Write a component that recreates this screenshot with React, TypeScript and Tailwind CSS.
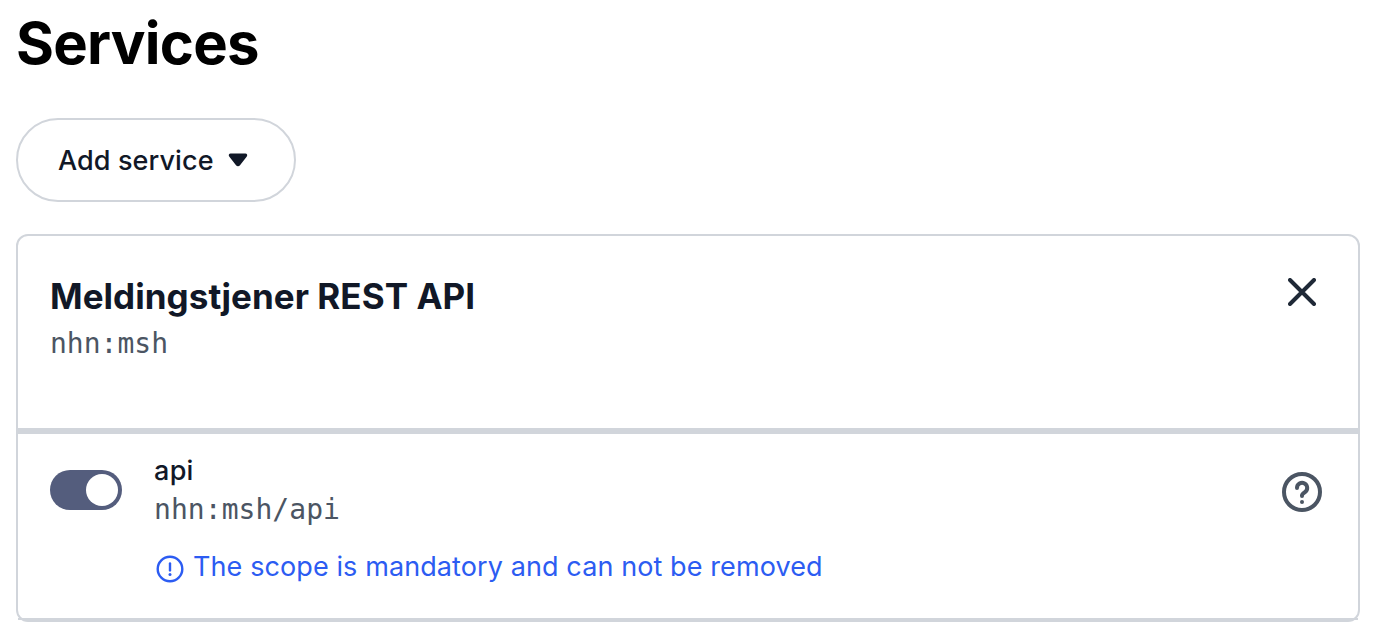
import { useState } from 'react';

interface Scope {
  name: string;
  id: string;
  mandatory: boolean;
}

interface Service {
  name: string;
  id: string;
  scopes: Scope[];
}

const SERVICES: Service[] = [
  {
    name: 'Meldingstjener REST API',
    id: 'nhn:msh',
    scopes: [{ name: 'api', id: 'nhn:msh/api', mandatory: true }],
  },
];

function CaretIcon() {
  return (
    <svg className="h-[14px] w-[20px]" viewBox="0 0 20 14" fill="currentColor">
      <path d="M2.6 0.4h14.8c1.6 0 2.4 1.8 1.4 3l-6.8 8.9c-1 1.4-3 1.4-4 0L1.2 3.4C.2 2.2 1 .4 2.6 .4z" />
    </svg>
  );
}

function CloseIcon() {
  return (
    <svg className="size-[28px]" viewBox="0 0 28 28" fill="none" stroke="currentColor">
      <path d="M2 2l24 24M26 2L2 26" strokeWidth={4} strokeLinecap="round" />
    </svg>
  );
}

function HelpIcon() {
  return (
    <svg className="size-10" viewBox="0 0 40 40" fill="none" stroke="currentColor">
      <circle cx="20" cy="20" r="18" strokeWidth={4} />
      <path
        d="M15 15.9a5.1 5.1 0 1 1 7.8 4.3c-1.7 1.1-2.8 1.9-2.8 3.4v.4"
        strokeWidth={4}
        strokeLinecap="round"
      />
      <circle cx="20" cy="30" r="2" fill="currentColor" stroke="none" />
    </svg>
  );
}

function InfoIcon() {
  return (
    <svg className="size-[28px]" viewBox="0 0 28 28" fill="none" stroke="currentColor">
      <circle cx="14" cy="14" r="12.3" strokeWidth={2.4} />
      <path d="M14 8.4v7" strokeWidth={2.4} strokeLinecap="round" />
      <circle cx="14" cy="19.6" r="1.5" fill="currentColor" stroke="none" />
    </svg>
  );
}

function Toggle({ checked, onChange }: { checked: boolean; onChange: () => void }) {
  return (
    <button
      type="button"
      role="switch"
      aria-checked={checked}
      onClick={onChange}
      className={`flex h-10 w-[72px] items-center rounded-full bg-[#545d7d] p-1 ${
        checked ? 'justify-end' : 'justify-start'
      }`}
    >
      <span className="size-8 rounded-full bg-white" />
    </button>
  );
}

function ScopeRow({ scope }: { scope: Scope }) {
  const [enabled, setEnabled] = useState(true);

  return (
    <div className="flex h-[186px] items-start border-b-2 border-[#d1d5db] pt-4 pr-9 pl-8">
      <div className="mt-5">
        <Toggle checked={enabled} onChange={() => !scope.mandatory && setEnabled(!enabled)} />
      </div>
      <div className="ml-8 flex-1 text-[28px] leading-10">
        <div className="pt-px text-[27px] leading-[39px] font-medium tracking-[0.3px]">{scope.name}</div>
        <div className="font-['DejaVu_Sans_Mono',monospace] tracking-[0.05px] text-[#4b5563]">{scope.id}</div>
        {scope.mandatory && (
          <div className="mt-[17px] flex items-center gap-[9px] pl-[2px] text-[#2c5cf2]">
            <span className="mt-[3px]">
              <InfoIcon />
            </span>
            <span className="text-[27px] tracking-[0.1px]">The scope is mandatory and can not be removed</span>
          </div>
        )}
      </div>
      <button type="button" aria-label="Help" className="mt-[22px] text-[#4b5563]">
        <HelpIcon />
      </button>
    </div>
  );
}

function ServiceCard({ service }: { service: Service }) {
  return (
    <section className="mt-8 rounded-xl border-2 border-[#d1d5db]">
      <header className="flex h-[198px] items-start justify-between border-b-[6px] border-[#d1d5db] pt-[38px] pr-[42px] pl-8">
        <div>
          <h2 className="text-[35px] leading-[44px] font-bold tracking-[0.05px]">{service.name}</h2>
          <div className="mt-[6px] font-['DejaVu_Sans_Mono',monospace] text-[28px] leading-10 text-[#4b5563]">
            {service.id}
          </div>
        </div>
        <button type="button" aria-label="Remove" className="mt-1 text-[#1f2937]">
          <CloseIcon />
        </button>
      </header>
      {service.scopes.map((scope) => (
        <ScopeRow key={scope.id} scope={scope} />
      ))}
    </section>
  );
}

export default function App() {
  return (
    <main className="h-[642px] bg-white pr-[26px] pl-4 font-[Inter,sans-serif] text-[#111827]">
      <h1 className="pt-[7px] text-[58px] leading-[72px] font-bold tracking-[-0.75px] text-black">Services</h1>
      <button
        type="button"
        className="mt-[39px] flex h-[84px] w-[280px] items-center gap-[14px] rounded-full border-2 border-[#d1d5db] pl-10 text-[27px] font-medium tracking-[0.1px]"
      >
        <span className="pt-[2px]">Add service</span>
        <CaretIcon />
      </button>
      {SERVICES.map((service) => (
        <ServiceCard key={service.id} service={service} />
      ))}
    </main>
  );
}
